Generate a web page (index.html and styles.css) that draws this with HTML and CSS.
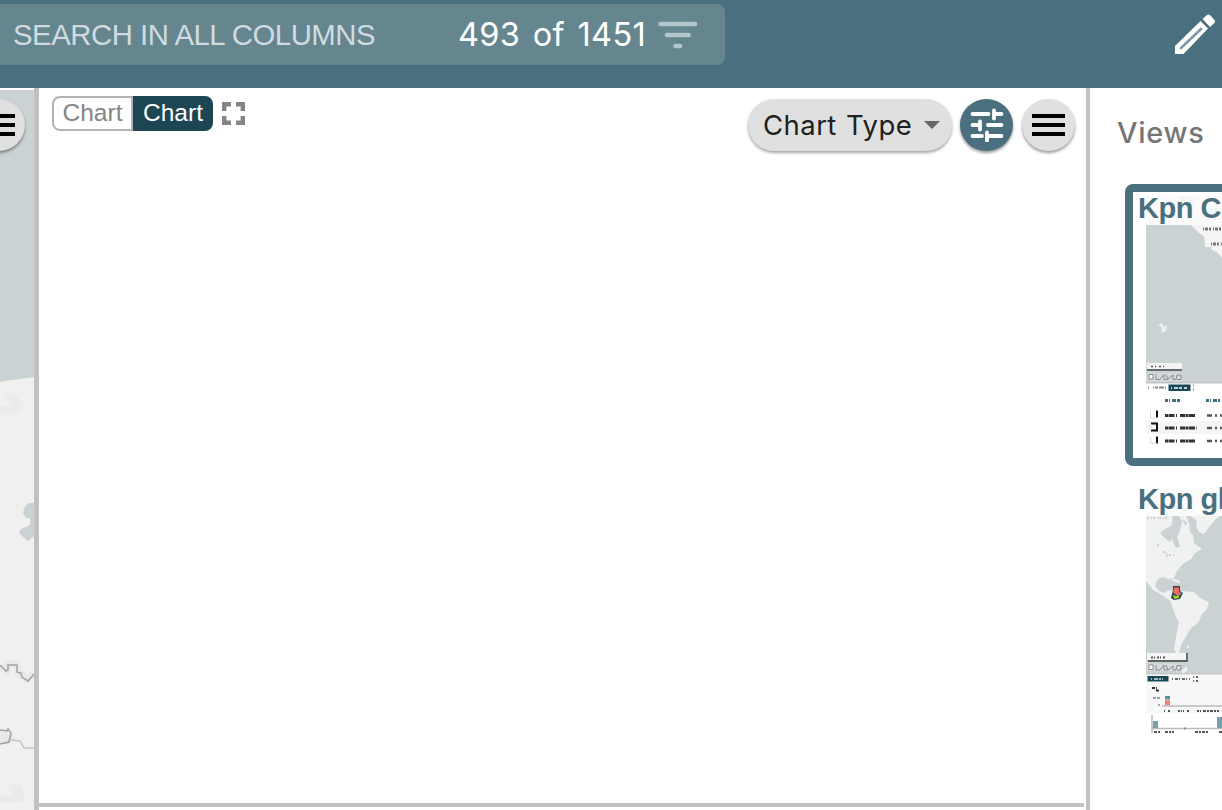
FILE: index.html
```html
<!DOCTYPE html>
<html lang="en">
<head>
<meta charset="utf-8">
<title>Dashboard</title>
<link rel="stylesheet" href="styles.css">
</head>
<body>
<header class="topbar">
  <div class="search">
    <span class="search-label">SEARCH IN ALL COLUMNS</span>
    <span class="count">493 of 1451</span>
    <svg class="filter" width="40" height="28" viewBox="0 0 40 28" stroke="#b5c5cc" stroke-width="4.6" stroke-linecap="round"><path d="M2.500 3h34.500M9 14h21.500M17.500 25h4.500"/></svg>
  </div>
  <svg class="pencil" width="42" height="42" viewBox="0 0 42 42"><path fill="#fff" d="M1 32 26.500 7 34 14.500 9.500 40H1zM28.500 5 33 1Q34.500 0 36 1L40.500 6Q41.500 7.500 40.500 9L36 13z"/><path d="M7 34 27 15" stroke="#7c9aa7" stroke-width="2.600" stroke-linecap="round"/></svg>
</header>
<main class="workspace">
  <section class="map-pane">
    <svg class="map" width="34" height="720" viewBox="0 90 34 720">
      <path fill="#cad2d4" d="M0 90h34v720H0z"/>
      <path fill="#f0f0ef" d="M0 382 12 380 20 379 34 377V810H0z"/>
      <path fill="#ebebeb" d="M3 395h15l4 15-22 6v-10h12z"/>
      <path fill="#cad2d4" d="M34 503h-5q-4 2-5 6l-1 4 3 5h4v7l-9 4-2 4 4 4 5 4 6-5z"/>
      <path fill="#eaeae9" d="M11 785l11 2 3 15-10 1zM0 797l18-2-3 8H0z"/>
      <g fill="none">
        <path d="M0 667 6 671 9 664h8l2 9 8 6 7-5" stroke="#e9e9e8" stroke-width="8"/>
        <path d="M0 665 6 671 8 670V665h9v7l4 1 1 4 6 4 6-7" stroke="#a2a2a2" stroke-width="1.500"/>
        <path d="M0 736l7 3 3-6" stroke="#e8e8e7" stroke-width="10"/>
        <path d="M0 730l7 1 1-2 3 4-2 9-9 2" stroke="#9f9f9f" stroke-width="1.500"/>
        <path d="M11 740l9 1 4 7h10" stroke="#c5c5c5" stroke-width="1.500"/>
      </g>
    </svg>
    <button class="round map-menu" aria-label="Map menu"><span class="bars"></span></button>
  </section>
  <div class="divider left"></div>
  <section class="chart-pane">
    <div class="toolbar">
      <div class="tabs"><span class="tab">Chart</span><span class="tab active">Chart</span></div>
      <svg class="expand" width="23" height="23" viewBox="0 0 23 23" fill="none" stroke="#858585" stroke-width="4.400"><path d="M2.200 9V2.200H9M14 2.200h6.800V9M20.800 14v6.800H14M9 20.800H2.200V14"/></svg>
      <div class="actions">
        <button class="chart-type"><span>Chart Type</span><i class="caret"></i></button>
        <button class="round primary" aria-label="Settings"><svg width="34" height="34" viewBox="0 0 34 34" stroke="#fff" stroke-width="3.800" stroke-linecap="round"><path d="M2.500 6h16M24 2.500v8M24 6h7.500M2.500 17H10M10 13.500v8M18 17h13.500M2.500 28H12M17 24.500v8M17 28h14.500"/></svg></button>
        <button class="round" aria-label="Chart menu"><span class="bars"></span></button>
      </div>
    </div>
    <div class="bottom-bar"></div>
  </section>
  <div class="divider"></div>
  <aside class="views">
    <h2>Views</h2>
    <article class="card selected">
      <h3>Kpn C</h3>
      <svg class="thumb" width="76" height="252" viewBox="1146 196 76 252">
        <path fill="#fafafa" d="M1146 196h76v252h-76z"/>
        <path fill="#f3f6f6" d="M1180 197h14v8h-14zM1202 208h17v11h-17z"/>
        <path fill="#cad2d4" d="M1146 225h76v157h-76z"/>
        <path fill="#f3f4f3" d="M1191 225h31v33l-5-6-5-2-1-3h-6l-1-11-5-3z"/>
        <path stroke="#777" stroke-width="3" stroke-dasharray="1 1 3 1 2 2" d="M1203 229h19M1211 244h11"/>
        <path fill="#edf0ef" d="M1158 325l4-2 2 4 3-2-1 6-5 2 1-5z"/>
        <path fill="#f4f4f4" d="M1147 363h35v6h-35z"/><path fill="#656a6b" d="M1147 369h35v2h-35z"/>
        <path stroke="#555" stroke-width="1.500" stroke-dasharray="2 2 1 3" d="M1151 366.500h13"/>
        <path fill="#d6dadb" d="M1147 373h35v8h-35z"/>
        <g fill="none" stroke="#7e8587" stroke-width=".9"><rect x="1149" y="374.500" width="4" height="4.500" fill="#fff"/><path d="M1156 374v5.500h4l4-5v5h4l-2-5M1168 379l5-4v4.500h3l1-4.500h4v4.500h-4"/></g>
        <path fill="#fff" d="M1146 383h76v65h-76z"/><path fill="#c2c4c4" d="M1146 382h76v1.500h-76z"/>
        <path fill="#184756" d="M1168.500 384.500h22v6.500h-22z"/>
        <g fill="none">
          <path stroke="#fff" stroke-width="1.500" stroke-dasharray="1 2 4 1 3 2 3 2" d="M1171 388h17"/>
          <path stroke="#888" stroke-width="2" stroke-dasharray="1 4 1 1 3 1 5 1" d="M1148 387.500h19M1193 385.500h5M1193 389.500h5"/>
          <path stroke="#416f80" stroke-width="3" stroke-dasharray="3 1 1 2 4 1" d="M1165 400.500h16M1206 400.500h14"/>
          <path fill="#f5f5f5" d="M1146 421h76v13h-76z"/>
          <path stroke="#111" stroke-width="2" d="M1157 410.500v7M1151 423.500h6v7h-6M1157 436.500v7"/>
          <path stroke="#ddd" d="M1150.500 411v7h6M1151 424v6M1150.500 437v6h6"/>
          <path stroke="#333" stroke-width="3" stroke-dasharray="3 .5 6 1.500 1 3 5 .5" d="M1165 415.500h31M1165 428h32M1165 441h31"/>
          <path stroke="#555" stroke-width="2.500" stroke-dasharray="5 3 2 3" d="M1207 415.500h15M1207 428h15M1207 441h15"/>
        </g>
      </svg>
    </article>
    <article class="card">
      <h3>Kpn gl</h3>
      <svg class="thumb" width="76" height="252" viewBox="1146 487 76 252">
        <path fill="#fbfbfb" d="M1146 487h76v29h-76z"/>
        <path fill="#cad2d4" d="M1146 516h76v158h-76z"/>
        <path fill="#f0f2f1" d="M1146 516h27l-2 12 2 14 3 6 4-2-3-9 3-6 2-10-3-5h7l3 7 1 9 3 3 1 8 8 6-7 4-4 6-8 5-6 7-3 7-6 1-5-2-5 2-3 7 4 5 5 2 4-3 5 1-2 5 4 4 5 4-3 2-8-6-7-5-9-5-7-9zM1191 516h29l-5 4-5 6-6 8-5-2-3-6 1-5zM1171 603l3-10 6-2 14 1 6 6 9 4-2 7-5 5-4 9-7 5-5 9-4 6-3 9 3 4-4 1-4-8 2-12 3-15-3-5z"/>
        <path fill="#cad2d4" d="M1160 533l5-4 6-3 2 12-3 4-5-4zM1173 520h5l-3 4zM1182 519l5 3-1 5z"/>
        <path fill="#f0f2f1" d="M1170 578l8 2 3 2-2 1-6-2zM1187 645h1.500v3h-1.500zM1182 670l5-4v5l-5 3zM1188 549l6 2-3 3-4-2z"/>
        <path stroke="#ccd1d1" fill="none" stroke-width="2" stroke-dasharray="2 2 1 1" d="M1147 518h21M1163 552h3l2 7M1169 555h5M1157 545h2"/>
        <path fill="#39434c" d="M1173 586h7v5l3 2-1 2-2 4-6 1-3-2 2-8z"/><path fill="#ef6c5e" d="M1174 587.500h5v4l2 2-4 2-4-3z"/><path fill="#9dcf3b" d="M1173 595l3 1 3-1v3l-5 1z"/><path fill="#9173a9" d="M1179 592l3 1-1 2h-3z"/>
        <path fill="#f4f5f5" d="M1147 653h39v7h-39z"/><path fill="none" stroke="#5d6263" stroke-width="1.800" d="M1148 661h39v-8"/>
        <path stroke="#555" stroke-width="2" stroke-dasharray="2 1 1 2" d="M1151 657.500h14"/>
        <path fill="#d6dadb" d="M1147 664h35v7h-35z"/>
        <g fill="none" stroke="#7e8587" stroke-width=".9"><rect x="1149" y="665" width="4" height="4.500" fill="#fff"/><path d="M1156 665v5h4l4-5v5h4l-2-5M1168 670l5-4v4h3l1-4.500h4v4.500h-4"/></g>
        <path fill="#f8f8f8" d="M1146 674h76v39h-76z"/><path fill="#c5c8c8" d="M1146 673h76v1.500h-76z"/>
        <path fill="#184756" d="M1147.500 676h21v5.500h-21z"/>
        <g fill="none">
          <path stroke="#d8e2e4" stroke-width="1.500" stroke-dasharray="1 2 4 1 2 1" d="M1151 679h14"/>
          <path stroke="#666" stroke-width="2" stroke-dasharray="1 2 3 1" d="M1172 679h18M1193 677h5M1193 681h5"/>
          <path stroke="#333" stroke-width="2" stroke-dasharray="3 1 1 1" d="M1152 688h5M1156 690.500h4"/>
          <path stroke="#888" stroke-width="1.500" stroke-dasharray="3 1" d="M1153 698h7M1158 705h2"/>
          <path stroke="#bbb" stroke-width="1.500" d="M1162 706h60M1152 715v18M1152 728.500h70"/>
          <path stroke="#555" stroke-width="2" stroke-dasharray="1 3 2 8 2 1 1 1" d="M1164 711h38"/>
          <path stroke="#555" stroke-width="2" stroke-dasharray="3 1 2 1" d="M1203 711h16M1154 732h7M1165 732h9M1195 732h14M1219 732h3"/>
          <path stroke="#74a0b0" stroke-width="2" d="M1184 728.500h2"/>
        </g>
        <path fill="#6687b1" d="M1165 696h5v3h-5z"/><path fill="#c2ba83" d="M1165 699h5v2h-5z"/><path fill="#f5806b" d="M1165 701h5v4h-5z"/>
        <path fill="#74a0b0" d="M1153 721h5v7h-5zM1217 717h5v11h-5z"/>
      </svg>
    </article>
  </aside>
</main>
</body>
</html>
```
FILE: styles.css
```css
* { box-sizing: border-box; }
body { margin: 0; width: 1222px; height: 810px; overflow: hidden; background: #fff; font-family: "Liberation Sans", Arial, sans-serif; }
svg { display: block; flex: none; }
button { border: 0; padding: 0; font: inherit; }
.topbar { height: 88px; background: #4a7080; display: flex; align-items: flex-start; justify-content: space-between; padding: 4px 6px 0 0; }
.search { width: 725px; height: 61px; background: #65858f; border-radius: 0 8px 8px 0; display: flex; align-items: center; padding-left: 13px; white-space: nowrap; }
.search-label { width: 445px; color: #d0dbe0; font-size: 29.3px; letter-spacing: -0.46px; }
.count { width: 200px; color: #fff; font: 32.5px Inter, sans-serif; letter-spacing: 0.35px; word-spacing: 3px; }
.filter { margin-top: 0; }
.pencil { margin-top: 10px; }
.workspace { height: 722px; display: flex; }
.map-pane { width: 34px; padding-top: 2px; position: relative; overflow: hidden; }
.round { width: 53px; height: 52px; border-radius: 50%; background: #e0e0e0; box-shadow: 0 2px 3px rgba(0,0,0,.4); display: flex; align-items: center; justify-content: center; flex: none; }
.map-menu { position: absolute; left: -28px; top: 11px; }
.bars { width: 33px; height: 22px; border-top: 4px solid #000; border-bottom: 4px solid #000; background: linear-gradient(#000, #000) center / 100% 4px no-repeat; }
.divider { width: 4px; background: #c1c1c1; flex: none; }
.divider.left { width: 5px; }
.chart-pane { width: 1047px; display: flex; flex-direction: column; justify-content: space-between; padding-bottom: 3px; }
.toolbar { display: flex; align-items: flex-start; padding: 8px 11px 0 13px; }
.tabs { display: flex; width: 161px; height: 35px; font-size: 24.5px; line-height: 30px; text-align: center; }
.tab { width: 81px; border: 2px solid #b3b3b3; border-radius: 8px 0 0 8px; color: #858585; }
.tab.active { width: 80px; border-color: #1c4654; border-radius: 0 8px 8px 0; background: #1c4654; color: #fff; }
.expand { margin: 6px 0 0 9px; }
.actions { margin: 3px 0 0 auto; display: flex; }
.chart-type { width: 204px; height: 52px; border-radius: 26px; background: #e0e0e0; box-shadow: 0 2px 3px rgba(0,0,0,.35); display: flex; align-items: center; justify-content: space-between; padding: 0 12px 0 15px; color: #202020; font: 27.5px Inter, sans-serif; letter-spacing: 0.45px; word-spacing: 1px; white-space: nowrap; }
.caret { border: 8px solid transparent; border-top-color: #666; border-bottom: 0; }
.primary { background: #4a7080; margin: 0 9px 0 8px; }
.bottom-bar { width: 1045px; height: 4px; background: #c1c1c1; }
.views { width: 132px; overflow: hidden; padding: 26px 0 0 27px; }
.views h2 { margin: 0; height: 70px; color: #757575; font: 500 29px/38px Inter, sans-serif; letter-spacing: 0.7px; }
.card { width: 200px; height: 282px; margin: 0 0 9px 8px; border: 8px solid transparent; border-radius: 8px; padding: 4px 0 0 13px; display: grid; grid-template-columns: 1fr; }
.card.selected { border-color: #4a7080; }
.card h3, .thumb { grid-area: 1 / 1; }
.card h3 { z-index: 1; margin: -5px 0 0 -8px; color: #4a7080; font-size: 29px; letter-spacing: -0.5px; line-height: 34px; white-space: nowrap; }
```
